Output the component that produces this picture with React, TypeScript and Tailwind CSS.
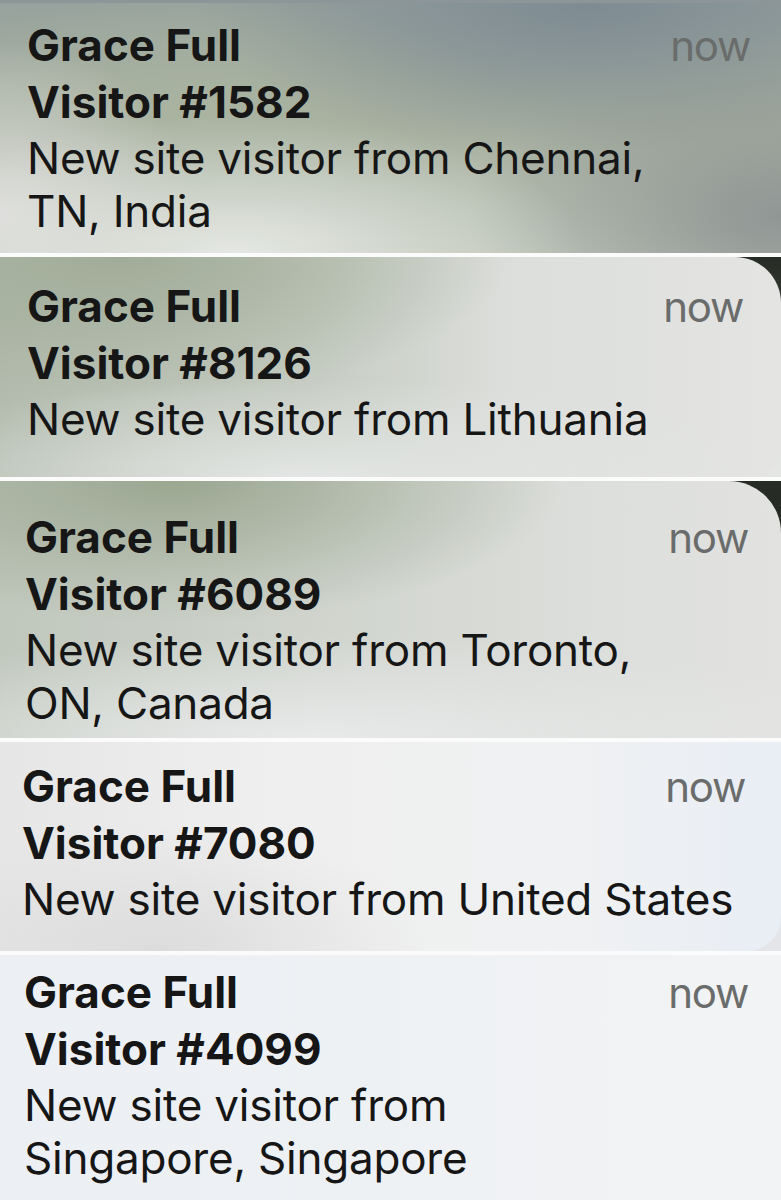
import React from "react";

type Card = {
    id: string;
    lines: string[];
    row: string;
    card: string;
};

const cards: Card[] = [
    {
        id: "1582",
        lines: ["New site visitor from Chennai,", "TN, India"],
        row: "h-[253px] bg-[#6f7a7a]",
        card: "pt-[14px] pl-[27px] pr-[31px] border-t-[3px] border-[#8c9597] bg-[radial-gradient(ellipse_45%_55%_at_30%_100%,#e4e7e2_0%,rgba(228,231,226,0)_100%),radial-gradient(ellipse_40%_70%_at_100%_85%,#8f9694_0%,rgba(143,150,148,0)_100%),radial-gradient(ellipse_50%_60%_at_75%_0%,#7e8b92_0%,rgba(126,139,146,0)_100%),radial-gradient(ellipse_25%_70%_at_0%_85%,#dcdcda_0%,rgba(220,220,218,0)_100%),radial-gradient(ellipse_40%_50%_at_25%_45%,#a9b3a0_0%,rgba(169,179,160,0)_100%),linear-gradient(180deg,#97a29e_0%,#a7b0a0_50%,#bfc6b9_100%)]",
    },
    {
        id: "8126",
        lines: ["New site visitor from Lithuania"],
        row: "h-[220px] bg-[linear-gradient(180deg,#262b25_0%,#3a3f38_30%,#e4e6e4_60%)]",
        card: "pt-[21px] pl-[27px] pr-[38px] rounded-tr-[46px] rounded-br-[30px] bg-[radial-gradient(ellipse_50%_65%_at_15%_0%,#a1ac98_0%,rgba(161,172,152,0)_100%),radial-gradient(ellipse_60%_45%_at_40%_100%,#e3e6e4_0%,rgba(227,230,228,0)_100%),linear-gradient(90deg,#b2bbad_0%,#c6ccc2_40%,#dcdedb_65%,#e4e5e3_100%)]",
    },
    {
        id: "6089",
        lines: ["New site visitor from Toronto,", "ON, Canada"],
        row: "h-[257px] bg-[linear-gradient(180deg,#262b25_0%,#262b25_20%,#e8eae8_40%)]",
        card: "pt-[28px] pl-[25px] pr-[33px] rounded-tr-[52px] bg-[radial-gradient(ellipse_50%_55%_at_22%_0%,#9ba791_0%,rgba(155,167,145,0)_100%),radial-gradient(ellipse_70%_40%_at_40%_100%,#e8eaea_0%,rgba(232,234,234,0)_100%),linear-gradient(90deg,#c0c7bc_0%,#d0d4cd_40%,#dcdedb_75%,#e2e3e1_100%)]",
    },
    {
        id: "7080",
        lines: ["New site visitor from United States"],
        row: "h-[209px] bg-[#e3e5e8]",
        card: "pt-[16px] pl-[22px] pr-[36px] rounded-br-[34px] bg-[radial-gradient(ellipse_35%_60%_at_20%_100%,#dcdcdc_0%,rgba(220,220,220,0)_100%),linear-gradient(90deg,#e6e6e6_0%,#efefef_35%,#f0f1f2_70%,#e9eef5_100%)]",
    },
    {
        id: "4099",
        lines: ["New site visitor from", "Singapore, Singapore"],
        row: "h-[245px] bg-[#eef0f2]",
        card: "pt-[9px] pl-[24px] pr-[33px] bg-[linear-gradient(90deg,#eceff3_0%,#eef1f4_45%,#f2f3f4_100%)]",
    },
];

function Notification({ c }: { c: Card }) {
    return (
        <div className={c.row}>
            <div className={`h-full overflow-hidden ${c.card}`}>
                <div className="flex items-baseline justify-between leading-[56px]">
                    <span className="font-bold text-[#161616]">Grace Full</span>
                    <span className="text-[42px] tracking-[-0.03em] text-[#6a6c6b]">now</span>
                </div>
                <div className="font-bold leading-[56px] text-[#161616]">Visitor #{c.id}</div>
                <div className="mt-[2px] leading-[53px] tracking-[-0.005em] text-[#161616]">
                    {c.lines.map((l, i) => (
                        <div key={i} className="whitespace-nowrap">{l}</div>
                    ))}
                </div>
            </div>
        </div>
    );
}

export default function App() {
    return (
        <div className="w-[781px] h-[1200px] overflow-hidden bg-[#fbfbfb] flex flex-col gap-[4px] font-['Inter','Noto_Sans',sans-serif] text-[44px]">
            {cards.map(c => (
                <Notification key={c.id} c={c} />
            ))}
        </div>
    );
}
